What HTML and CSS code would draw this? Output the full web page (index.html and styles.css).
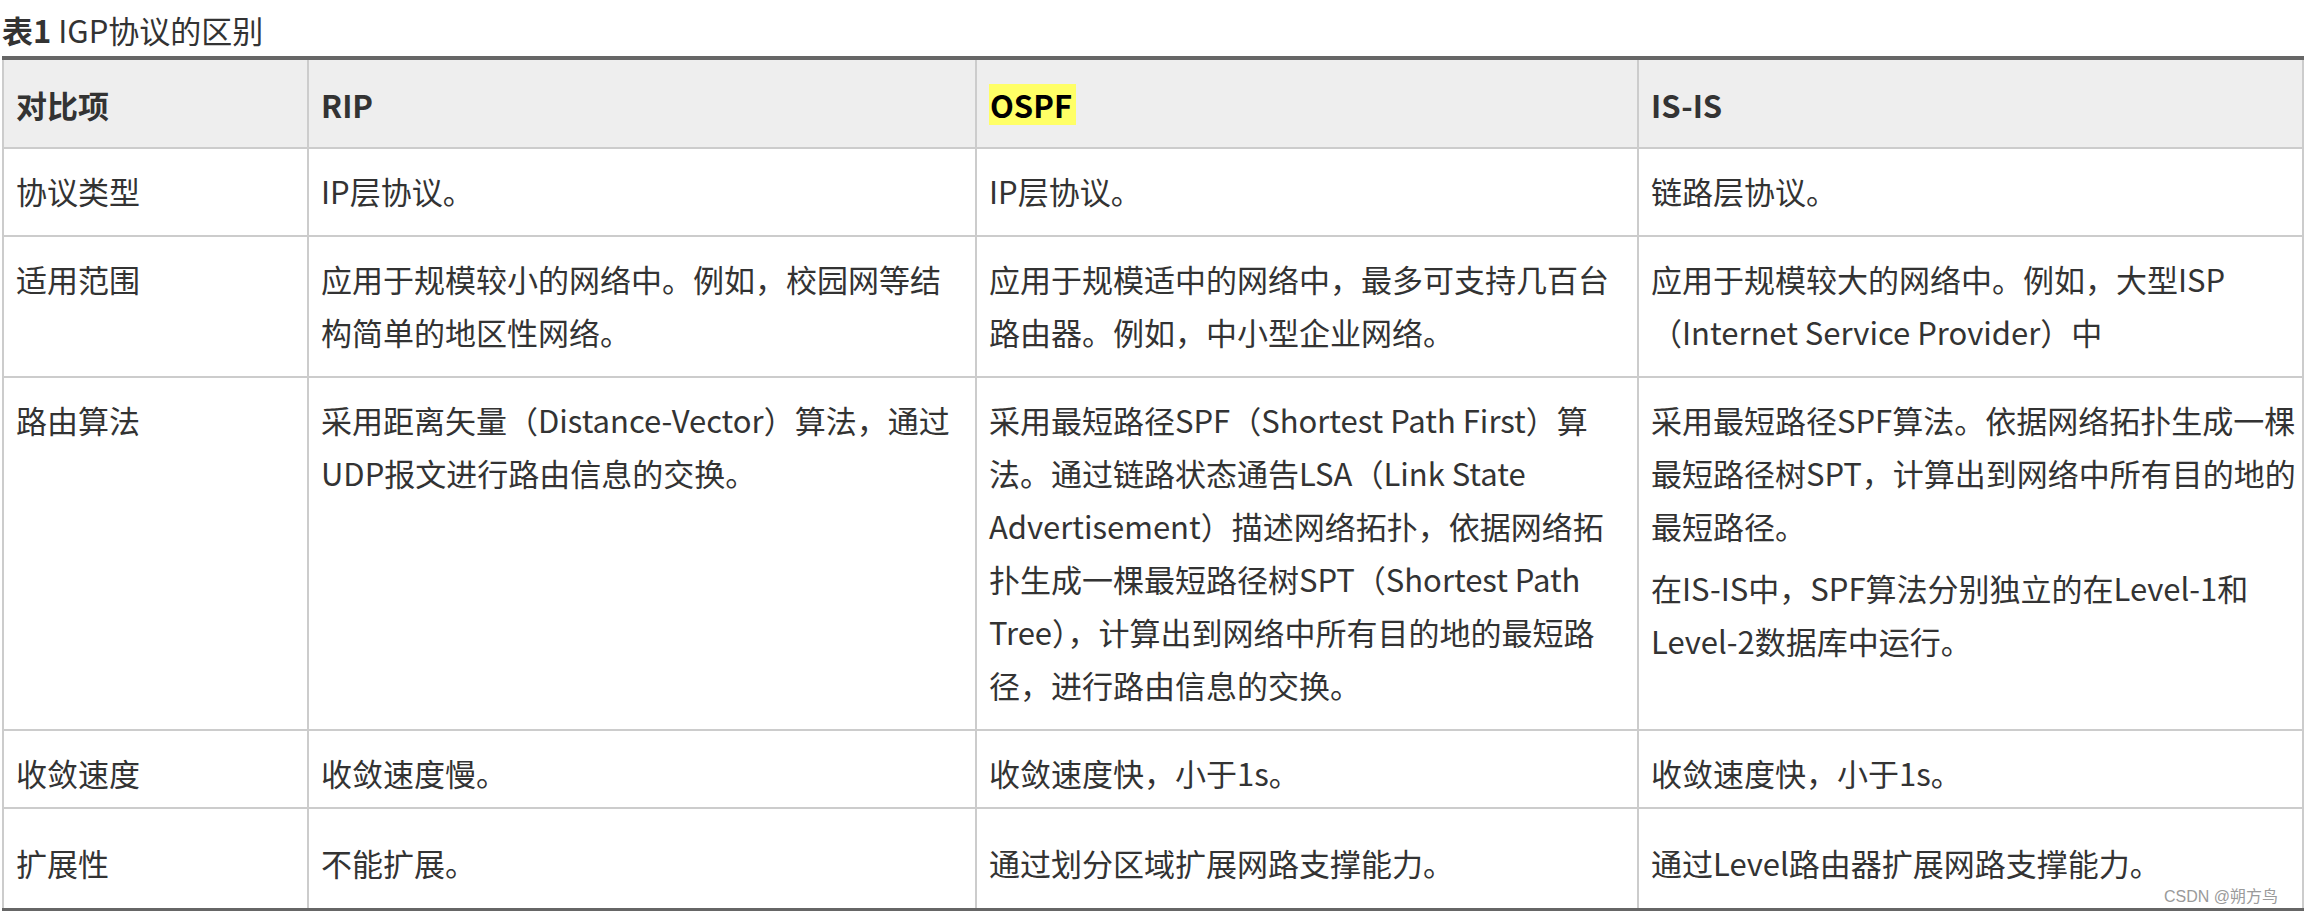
FILE: index.html
```html
<!DOCTYPE html>
<html lang="zh-CN">
<head>
<meta charset="utf-8">
<title>IGP协议的区别</title>
<link rel="stylesheet" href="styles.css">
</head>
<body>
<div class="page">
  <div class="caption"><b>表1</b> IGP协议的区别</div>
  <div class="table-wrap">
    <table class="igp">
      <thead>
        <tr>
          <th class="c1">对比项</th>
          <th class="c2">RIP</th>
          <th class="c3"><span class="hl">OSPF</span></th>
          <th class="c4">IS-IS</th>
        </tr>
      </thead>
      <tbody>
        <tr>
          <td>协议类型</td>
          <td>IP层协议。</td>
          <td>IP层协议。</td>
          <td>链路层协议。</td>
        </tr>
        <tr>
          <td>适用范围</td>
          <td>应用于规模较小的网络中。例如，校园网等结构简单的地区性网络。</td>
          <td>应用于规模适中的网络中，最多可支持几百台路由器。例如，中小型企业网络。</td>
          <td>应用于规模较大的网络中。例如，大型ISP（Internet Service Provider）中</td>
        </tr>
        <tr class="algo">
          <td>路由算法</td>
          <td>采用距离矢量（Distance-Vector）算法，通过UDP报文进行路由信息的交换。</td>
          <td>采用最短路径SPF（Shortest Path First）算法。通过链路状态通告LSA（Link State Advertisement）描述网络拓扑，依据网络拓扑生成一棵最短路径树SPT（Shortest Path Tree），计算出到网络中所有目的地的最短路径，进行路由信息的交换。</td>
          <td>
            <p>采用最短路径SPF算法。依据网络拓扑生成一棵最短路径树SPT，计算出到网络中所有目的地的最短路径。</p>
            <p>在IS-IS中，SPF算法分别独立的在Level-1和Level-2数据库中运行。</p>
          </td>
        </tr>
        <tr class="speed">
          <td>收敛速度</td>
          <td>收敛速度慢。</td>
          <td>收敛速度快，小于1s。</td>
          <td>收敛速度快，小于1s。</td>
        </tr>
        <tr class="scale">
          <td>扩展性</td>
          <td>不能扩展。</td>
          <td>通过划分区域扩展网路支撑能力。</td>
          <td>通过Level路由器扩展网路支撑能力。</td>
        </tr>
      </tbody>
    </table>
    <div class="watermark">CSDN @朔方鸟</div>
  </div>
</div>
</body>
</html>
```

FILE: styles.css
```css
html, body {
  margin: 0;
  padding: 0;
  background: #ffffff;
}

body {
  font-family: "Noto Sans CJK SC", "Noto Sans", sans-serif;
  color: #333333;
}

.page {
  padding-left: 2px;
  width: 2302px;
}

.caption {
  height: 56px;
  box-sizing: border-box;
  padding-top: 10px;
  font-size: 31px;
  line-height: 40px;
  white-space: nowrap;
}

.caption b {
  font-weight: 700;
}

.table-wrap {
  position: relative;
}

.igp {
  width: 2302px;
  table-layout: fixed;
  border-collapse: separate;
  border-spacing: 0;
  border-top: 4px solid #666666;
  border-bottom: 3px solid #666666;
  font-size: 31px;
  line-height: 53px;
}

.igp th,
.igp td {
  box-sizing: border-box;
  text-align: left;
  vertical-align: top;
  padding: 15px 12px 18px 12px;
  border-right: 2px solid #cccccc;
  border-bottom: 2px solid #cccccc;
  word-break: normal;
}

.igp td:nth-child(4) {
  padding-right: 3px;
}

.igp tr > :first-child {
  border-left: 2px solid #cccccc;
}

.igp tbody tr:last-child td {
  border-bottom: none;
}

.igp th {
  background: #eeeeee;
  font-weight: 700;
  padding-top: 18px;
  padding-bottom: 16px;
}

.c1 { width: 307px; }
.c2 { width: 668px; }
.c3 { width: 662px; }
.c4 { width: 665px; }

.hl {
  display: inline-block;
  background: #ffff66;
  color: #000000;
  line-height: 41px;
  padding: 0 4px 0 1px;
  vertical-align: baseline;
}

.igp p {
  margin: 0 0 9px 0;
}

.igp p:last-child {
  margin-bottom: 0;
}

.igp tr.speed td {
  padding-bottom: 8px;
}

.igp tr.scale td {
  padding-top: 27px;
  padding-bottom: 19px;
}

.watermark {
  position: absolute;
  right: 26px;
  bottom: 5px;
  font-family: "Liberation Sans", "Noto Sans CJK SC", sans-serif;
  font-size: 16px;
  line-height: 18px;
  color: #9a9a9a;
  white-space: nowrap;
}
```
